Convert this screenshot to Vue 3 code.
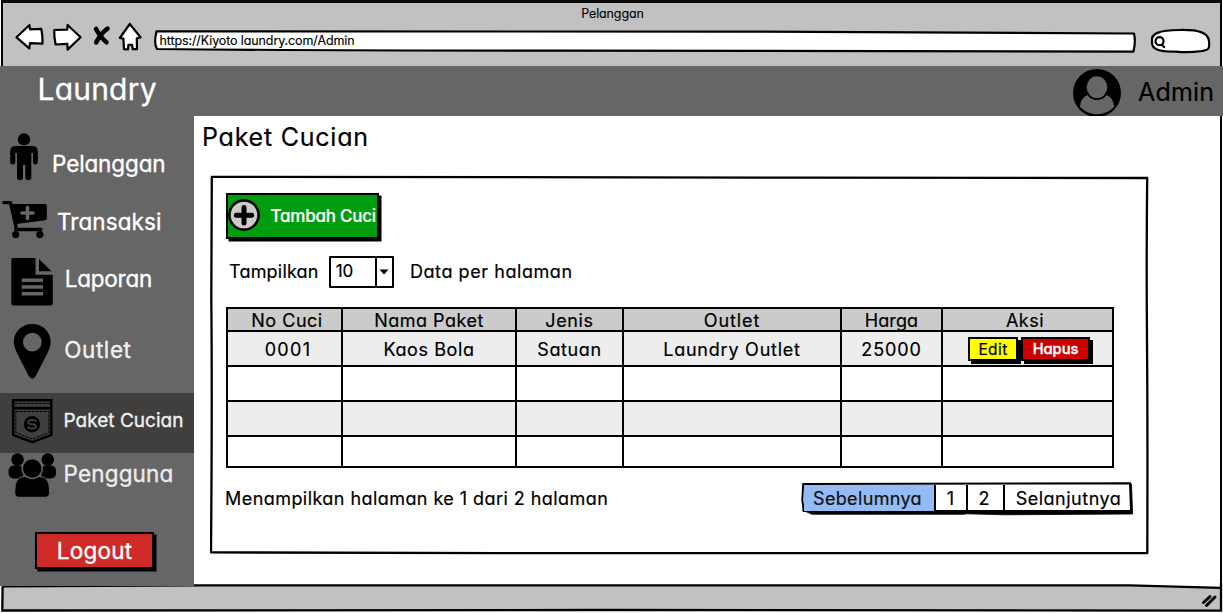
<script setup>
const columns = [
  { label: 'No Cuci', cls: 'c-no' },
  { label: 'Nama Paket', cls: 'c-name' },
  { label: 'Jenis', cls: 'c-kind' },
  { label: 'Outlet', cls: 'c-outlet' },
  { label: 'Harga', cls: 'c-price' },
  { label: 'Aksi', cls: 'c-action' },
]
const record = ['0001', 'Kaos Bola', 'Satuan', 'Laundry Outlet', '25000']
const emptyRows = ['plain', 'shade', 'plain']
</script>

<template>
  <div class="window">
    <header class="chrome">
      <div class="win-title">Pelanggan</div>
      <div class="toolbar">
        <svg class="nav" viewBox="0 20 154 34" width="154" height="34">
          <g fill="#fff" stroke="#000" stroke-width="2.2" stroke-linejoin="round">
            <path d="M16.5 37.3 L29.5 25 L30 29.3 L41.3 28.8 Q42.8 36 42.5 43.6 L30 43.2 L29.3 48.3 Z" />
            <path d="M80.6 37.2 L67.6 25 L67.2 29.6 L54.2 30 Q54 36 55.6 44.5 L67.4 43.8 L67.6 49.6 Z" />
            <path d="M129.8 24 L140.6 37.4 L136.8 38.4 L137 49.2 L132.8 49.2 L132 44.8 L128.4 44.8 L128 49.4 L124 49.2 L123.4 38.6 L119.8 38 Z" />
          </g>
          <path d="M96 29 Q101 38 106.5 42.3 M107.5 28.6 Q101 33 96.2 42.4" fill="none" stroke="#000" stroke-width="4.6" stroke-linecap="round" />
        </svg>
        <div class="address">
          <svg class="sketch" viewBox="154 28 982 26" width="982" height="26">
            <path d="M156.5 31.4 Q400 30.8 740 31.6 T1134 33.5 Q1136 42 1133.4 51.6 Q800 50.6 560 50.6 T157 49 Q153.6 43 156.5 31.4 Z" fill="#fff" stroke="#000" stroke-width="2.2" stroke-linejoin="round" />
          </svg>
          <span class="url">https://Kiyoto laundry.com/Admin</span>
        </div>
        <svg class="search" viewBox="1148 26 64 30" width="64" height="30">
          <path d="M1152 41 C1151 34 1158 30 1180 30 C1200 29.6 1208 33 1209 41 C1210 51 1207 50 1202 51 Q1188 53 1176 51.6 C1160 52 1151 50 1152 41 Z" fill="#fff" stroke="#000" stroke-width="2.2" />
          <path d="M1161 43.8 L1164 47" stroke="#000" stroke-width="2.4" stroke-linecap="round" />
          <circle cx="1159.5" cy="41.2" r="4" fill="#fff" stroke="#000" stroke-width="2.2" />
        </svg>
      </div>
    </header>

    <div class="topbar">
      <span class="brand">Laundry</span>
      <div class="user">
        <svg viewBox="1072 68 50 48" width="50" height="48">
          <circle cx="1097" cy="93" r="24" fill="#000" />
          <path d="M1080 107 Q1081 95 1091 94.5 L1103 94.5 Q1113 95 1114 107 Q1107 114.3 1097 114.3 Q1087 114.3 1080 107 Z" fill="#666" />
          <ellipse cx="1097" cy="87.2" rx="11.2" ry="11.8" fill="#666" stroke="#000" stroke-width="1.8" />
        </svg>
        <span>Admin</span>
      </div>
    </div>

    <div class="body">
      <nav class="side">
        <div class="item i-person">
          <svg viewBox="0 130 56 68" width="56" height="68">
            <circle cx="24" cy="139.4" r="6.2" />
            <path d="M15.5 146 H32.5 Q37.8 146 37.8 151.5 V162 Q37.8 164.5 35.4 164.5 Q33 164.5 33 162 V153 H31.3 V177.5 Q31.3 180.3 28.3 180.3 Q25.3 180.3 25.3 177.5 V165 H23 V177.5 Q23 180.3 20 180.3 Q17 180.3 17 177.5 V153 H15.3 V162 Q15.3 164.5 12.7 164.5 Q10.2 164.5 10.2 162 V151.5 Q10.2 146 15.5 146 Z" />
          </svg>
          <span>Pelanggan</span>
        </div>
        <div class="item i-cart">
          <svg viewBox="0 198 56 47" width="56" height="47">
            <path d="M3.8 202.6 H10.5 L16 226.5 V229.5 H41" fill="none" stroke="#000" stroke-width="3.4" stroke-linecap="round" stroke-linejoin="round" />
            <path d="M11.5 204 H45 Q46.8 204 46.8 206 V218.5 Q46.8 220 45 220.2 L16.5 224 Z" />
            <circle cx="15.7" cy="234.6" r="3.6" />
            <circle cx="39.8" cy="234.6" r="3.6" />
            <path d="M27.5 207.5 V218.5 M22 213 H33" fill="none" stroke="#666" stroke-width="3.6" stroke-linecap="round" />
          </svg>
          <span>Transaksi</span>
        </div>
        <div class="item i-doc">
          <svg viewBox="0 245 56 68" width="56" height="68">
            <path d="M13 258 H35.5 V274.7 H52.8 V303.5 Q52.8 305.5 50.8 305.5 H13.5 Q11.3 305.5 11.3 303.5 V260 Q11.3 258 13 258 Z M39 259 L51.5 271.2 H39 Z" />
            <path d="M21.7 280.3 H43 M21.7 287 H43 M21.7 293.8 H43" stroke="#666" stroke-width="3.4" />
          </svg>
          <span>Laporan</span>
        </div>
        <div class="item i-pin">
          <svg viewBox="0 313 56 73" width="56" height="73">
            <path fill-rule="evenodd" d="M32.3 324 C43 324 50.7 332 50.7 342 C50.7 347 48 352 46 356 L36 375.5 Q34.5 378.5 32.3 378.5 Q30 378.5 28.5 375.5 L18.5 356 C16.5 352 13.8 347 13.8 342 C13.8 332 21.5 324 32.3 324 Z M32.3 332.8 A9.3 9.3 0 1 0 32.3 351.4 A9.3 9.3 0 1 0 32.3 332.8 Z" />
          </svg>
          <span>Outlet</span>
        </div>
        <div class="item i-pocket">
          <svg viewBox="0 393 56 60" width="56" height="60">
            <g fill="none" stroke="#000">
              <path d="M13.2 400.3 H51.3 V434.8 L32.2 442.2 L13.2 434.8 Z" stroke-width="2.5" />
              <path d="M13 408.2 H51.5" stroke-width="2.8" />
              <path d="M15 403.5 H50" stroke-width="1" stroke-dasharray="3 1" />
              <path d="M15.8 411.5 H48.8 V432.5 L32.2 439 L15.8 432.5 Z" stroke-width="1" stroke-dasharray="3 1" />
            </g>
            <circle cx="32" cy="424.2" r="8.2" />
            <path d="M36.3 421.6 Q35.5 420 32 420 Q28.2 420 28.2 422.2 Q28.2 424 32 424.2 Q36 424.5 36 426.4 Q36 428.5 32 428.5 Q28.5 428.5 27.7 426.9" fill="none" stroke="#403f3d" stroke-width="1.9" />
          </svg>
          <span>Paket Cucian</span>
        </div>
        <div class="item i-group">
          <svg viewBox="0 453 56 42" width="56" height="42">
            <circle cx="17.6" cy="459.6" r="6.3" />
            <circle cx="47.8" cy="459.6" r="6.3" />
            <rect x="8.6" y="465.5" width="15" height="13" rx="5" />
            <rect x="41" y="465.5" width="15" height="13" rx="5" />
            <path d="M14.8 490 Q14.8 477 24 476.5 H40 Q49.5 477 49.5 490 V493 Q49.5 497.3 45 497.3 H19 Q14.8 497.3 14.8 493 Z" stroke="#666" stroke-width="1" />
            <circle cx="32.2" cy="468.5" r="10" stroke="#666" stroke-width="1.5" />
          </svg>
          <span>Pengguna</span>
        </div>
        <button class="btn logout">Logout</button>
      </nav>

      <main class="main">
        <h1>Paket Cucian</h1>
        <section class="card">
          <svg class="sketch" viewBox="210 175 939 380" width="939" height="380">
            <path d="M211.8 176.8 Q600 176.5 800 177.6 L1147.2 178 Q1146.3 260 1147 340 T1147.3 553 Q700 553.6 500 553.2 T211 552.4 Q212.3 400 211.3 300 Z" fill="none" stroke="#000" stroke-width="2.3" stroke-linejoin="round" />
          </svg>
          <button class="btn add">
            <svg viewBox="0 0 32 32" width="32" height="32">
              <circle cx="16" cy="16" r="14.6" fill="#ccc" stroke="#000" stroke-width="2.6" />
              <path d="M16 8.5 V24 M8.3 16.2 H23.7" stroke="#000" stroke-width="5" stroke-linecap="round" />
            </svg>
            <span>Tambah Cuci</span>
          </button>

          <div class="length">
            <span>Tampilkan</span>
            <div class="select">
              <span>10</span>
              <i><svg viewBox="0 0 10 6" width="10" height="6"><path d="M0.5 0.5 H9.5 L5 5.5 Z" /></svg></i>
            </div>
            <span class="per">Data per halaman</span>
          </div>

          <div class="table">
            <div v-for="c in columns" :key="c.cls" class="cell head" :class="c.cls"><span>{{ c.label }}</span></div>
            <div v-for="(v, i) in record" :key="v" class="cell data shade" :class="'d' + i"><span>{{ v }}</span></div>
            <div class="cell shade actions">
              <button class="btn edit">Edit</button>
              <button class="btn del">Hapus</button>
            </div>
            <template v-for="(r, i) in emptyRows" :key="i">
              <div v-for="c in columns" :key="c.cls" class="cell" :class="r"></div>
            </template>
          </div>

          <div class="foot">
            <span class="info">Menampilkan halaman ke 1 dari 2 halaman</span>
            <div class="pager">
              <svg class="sketch" viewBox="800 481 334 36" width="334" height="36">
                <path d="M802.3 510 L812 514.3 H964 L966 513.8 L1004 514.8 L1132.6 514 L1131.5 484 L1129 483 V510 Z" stroke="#000" stroke-width="0.8" />
                <path d="M803.2 484 L1130 483.3 L1131 511 H803.8 L802.3 500 Z" fill="#fff" stroke="#000" stroke-width="2" />
              </svg>
              <span class="prev">Sebelumnya</span>
              <span class="p1">1</span>
              <span class="p2">2</span>
              <span class="next">Selanjutnya</span>
            </div>
          </div>
        </section>
      </main>
      <div class="edge"></div>
    </div>

    <footer class="status">
      <svg viewBox="0 583 1223 30" width="1223" height="30">
        <path d="M2.6 586.3 L194 585.3 L400 585.4 H1130 L1220.7 587.8 V610.5 L600 610 L2.3 610.5 Z" fill="#c1c1c1" />
        <path d="M2.6 586.3 L194 585.3 L400 585.4 H1130 L1220.7 587.8 M1221 583 V610.7 L600 610 L2.3 610.5 L2.6 586.3" fill="none" stroke="#000" stroke-width="2.3" />
        <path d="M0 583 H194 V586 H0 Z" fill="#666" />
        <path d="M1203.5 602.5 L1210 596.5 M1206.5 605.5 L1215 597" fill="none" stroke="#000" stroke-width="3" stroke-linecap="round" />
      </svg>
    </footer>
  </div>
</template>

<style>
html, body { background: #fff; overflow: hidden; }
</style>

<style scoped>
.window {
  width: 1223px; height: 613px; overflow: hidden; background: #fff; color: #000;
  display: grid; grid-template-rows: 66px 50px 467px 30px;
  font-family: Inter, "Open Sans", sans-serif; font-feature-settings: "cv11", "ss03"; font-size: 18px;
  -webkit-text-stroke: 0.2px currentColor;
}
.sketch { position: absolute; left: 0; top: 0; pointer-events: none; }
.status svg { display: block; }
button { font: inherit; font-feature-settings: inherit; padding: 0; margin: 0; color: inherit; }
.btn { border: 2px solid #000; box-sizing: border-box; display: flex; align-items: center; justify-content: center; white-space: nowrap; }

.chrome {
  background: #c1c1c1; box-sizing: border-box; margin: 0 1px 0 1px;
  border: solid #000; border-width: 3px 2px 0 2px; border-top-color: #0a0a0a;
}
.win-title { height: 16px; margin: 2px 0 0 2px; line-height: 17px; text-align: center; font-size: 12.5px; letter-spacing: -0.13px; -webkit-text-stroke-width: 0.1px; }
.toolbar { display: flex; align-items: flex-start; margin-left: -3px; }
.nav { margin-top: -1px; flex: none; }
.address { position: relative; width: 982px; height: 26px; margin-top: 7px; flex: none; }
.url { position: relative; display: block; padding-left: 5.5px; font-size: 12.5px; line-height: 25px; letter-spacing: -0.11px; white-space: nowrap; -webkit-text-stroke-width: 0.15px; }
.search { margin: 5px 0 0 12px; flex: none; }

.topbar { background: #666; display: flex; justify-content: space-between; }
.brand { margin-left: 37.5px; font-size: 30px; line-height: 47px; color: #fff; letter-spacing: 0.2px; -webkit-text-stroke-width: 0.3px; }
.user { display: flex; padding-top: 2px; width: 151px; }
.user span { margin-left: 16px; font-size: 25px; line-height: 49px; letter-spacing: 0.2px; }

.body { display: grid; grid-template-columns: 194px 1fr 3px; }
.edge { background: #000; width: 2px; }
.side { background: #666; padding-top: 14px; -webkit-text-stroke-width: 0.35px; }
.item { display: flex; align-items: center; color: #fff; font-size: 22.5px; }
.item svg { flex: none; overflow: visible; }
.item span { white-space: nowrap; }
.i-person { height: 68px; }
.i-person span { margin-left: -4px; padding-bottom: 1px; letter-spacing: -0.12px; }
.i-cart { height: 47px; }
.i-cart span { margin-left: 1px; letter-spacing: 0.08px; }
.i-doc { height: 68px; }
.i-doc span { margin-left: 8.7px; padding-bottom: 1px; letter-spacing: -0.21px; }
.i-pin { height: 73px; color: #f0f0f0; }
.i-pin span { margin-left: 8.2px; letter-spacing: 0.6px; }
.i-pocket { height: 60px; margin-top: 7px; background: #403f3d; font-size: 19px; }
.i-pocket span { margin-left: 7.5px; padding-bottom: 6px; color: #f0f0f0; letter-spacing: 0.02px; }
.i-group { height: 42px; color: #ececec; }
.i-group span { margin-left: 7.5px; padding-bottom: 1px; letter-spacing: 0.17px; }
.logout { width: 119px; height: 37px; margin: 37px 0 0 35px; background: #cf2a27; color: #fff; font-size: 22.5px; letter-spacing: 0.22px; box-shadow: 2.5px 2.5px 0 #000; }

.main { padding-left: 8px; min-width: 0; }
h1 { margin: 5px 0 0 0; font-weight: 400; font-size: 25px; line-height: 32px; letter-spacing: 0.77px; }
.card { position: relative; width: 939px; height: 380px; margin: 22px 0 0 8px; box-sizing: border-box; padding: 18px 0 0 16px; }
.add { position: relative; width: 153px; height: 46px; overflow: visible; background: #009e0f; color: #fff; justify-content: flex-start; box-shadow: 2.5px 2.5px 0 #000; }
.add svg { flex: none; margin-top: -2px; }
.add span { margin-left: 10.5px; font-size: 17px; letter-spacing: -0.23px; font-weight: 500; }
.length { display: flex; align-items: center; height: 32px; margin: 17px 0 0 3px; }
.length > span { letter-spacing: 0.2px; padding-bottom: 1px; }
.select { box-sizing: border-box; width: 65px; height: 32px; border: 2px solid #000; border-radius: 1px; margin-left: 10px; display: flex; font-size: 17px; }
.select span { flex: 1; line-height: 27px; padding-left: 5px; letter-spacing: 0; }
.select i { width: 15px; border-left: 2px solid #000; display: flex; align-items: center; justify-content: center; }
.length .per { margin-left: 16.3px; letter-spacing: 0.56px; }

.table {
  width: 888px; height: 161px; box-sizing: border-box; margin-top: 19px; background: #000; border: 2px solid #000;
  display: grid; gap: 2px; grid-template-columns: 113px 172px 105px 216px 99px 169px; grid-template-rows: 21px 33px 33px 33px 29px;
}
.cell { display: flex; align-items: center; justify-content: center; background: #fff; min-height: 0; min-width: 0; white-space: nowrap; }
.head { background: #cbcbcb; letter-spacing: 0.5px; padding-top: 2px; box-sizing: border-box; }
.shade { background: #ededed; }
.data { padding-top: 2px; box-sizing: border-box; letter-spacing: 0.6px; }
.c-no { padding-left: 5px; }
.d0 { padding-left: 7px; }
.c-kind { letter-spacing: 0.65px; }
.c-outlet { letter-spacing: 0.9px; }
.c-price { letter-spacing: 0.11px; }
.c-action { padding-right: 5px; }
.d0 { letter-spacing: 1.28px; }
.d3 { letter-spacing: 0.77px; }
.d4 { letter-spacing: 0.9px; }
.actions { justify-content: flex-start; padding-left: 25px; }
.edit { width: 50px; height: 24px; padding-top: 1px; background: #ff0; font-size: 15.5px; letter-spacing: 0.4px; box-shadow: 3px 3px 0 #000; }
.del { width: 69px; height: 24px; margin-left: 3px; padding-top: 1px; background: #c00; color: #fff; font-size: 14.7px; font-weight: 500; letter-spacing: -0.05px; box-shadow: 3px 3px 0 #000; -webkit-text-stroke-width: 0.4px; }

.foot { display: flex; justify-content: space-between; align-items: flex-start; margin-top: 13px; }
.info { line-height: 35px; margin-left: -1px; letter-spacing: 0.44px; white-space: nowrap; }
.pager { position: relative; width: 334px; height: 36px; margin-right: 15px; display: flex; box-sizing: border-box; padding: 3.5px 0 0 4px; }
.pager span { position: relative; height: 26px; line-height: 28px; text-align: center; box-sizing: border-box; border-right: 2px solid #000; }
.pager .prev { width: 132px; padding-right: 3px; background: #94bbf3; letter-spacing: 0.35px; color: #111; }
.pager .p1 { width: 32px; padding-right: 1px; }
.pager .p2 { width: 37px; padding-right: 3px; }
.pager .next { width: 125px; border-right: 0; padding-left: 2px; letter-spacing: 0.5px; }
</style>
